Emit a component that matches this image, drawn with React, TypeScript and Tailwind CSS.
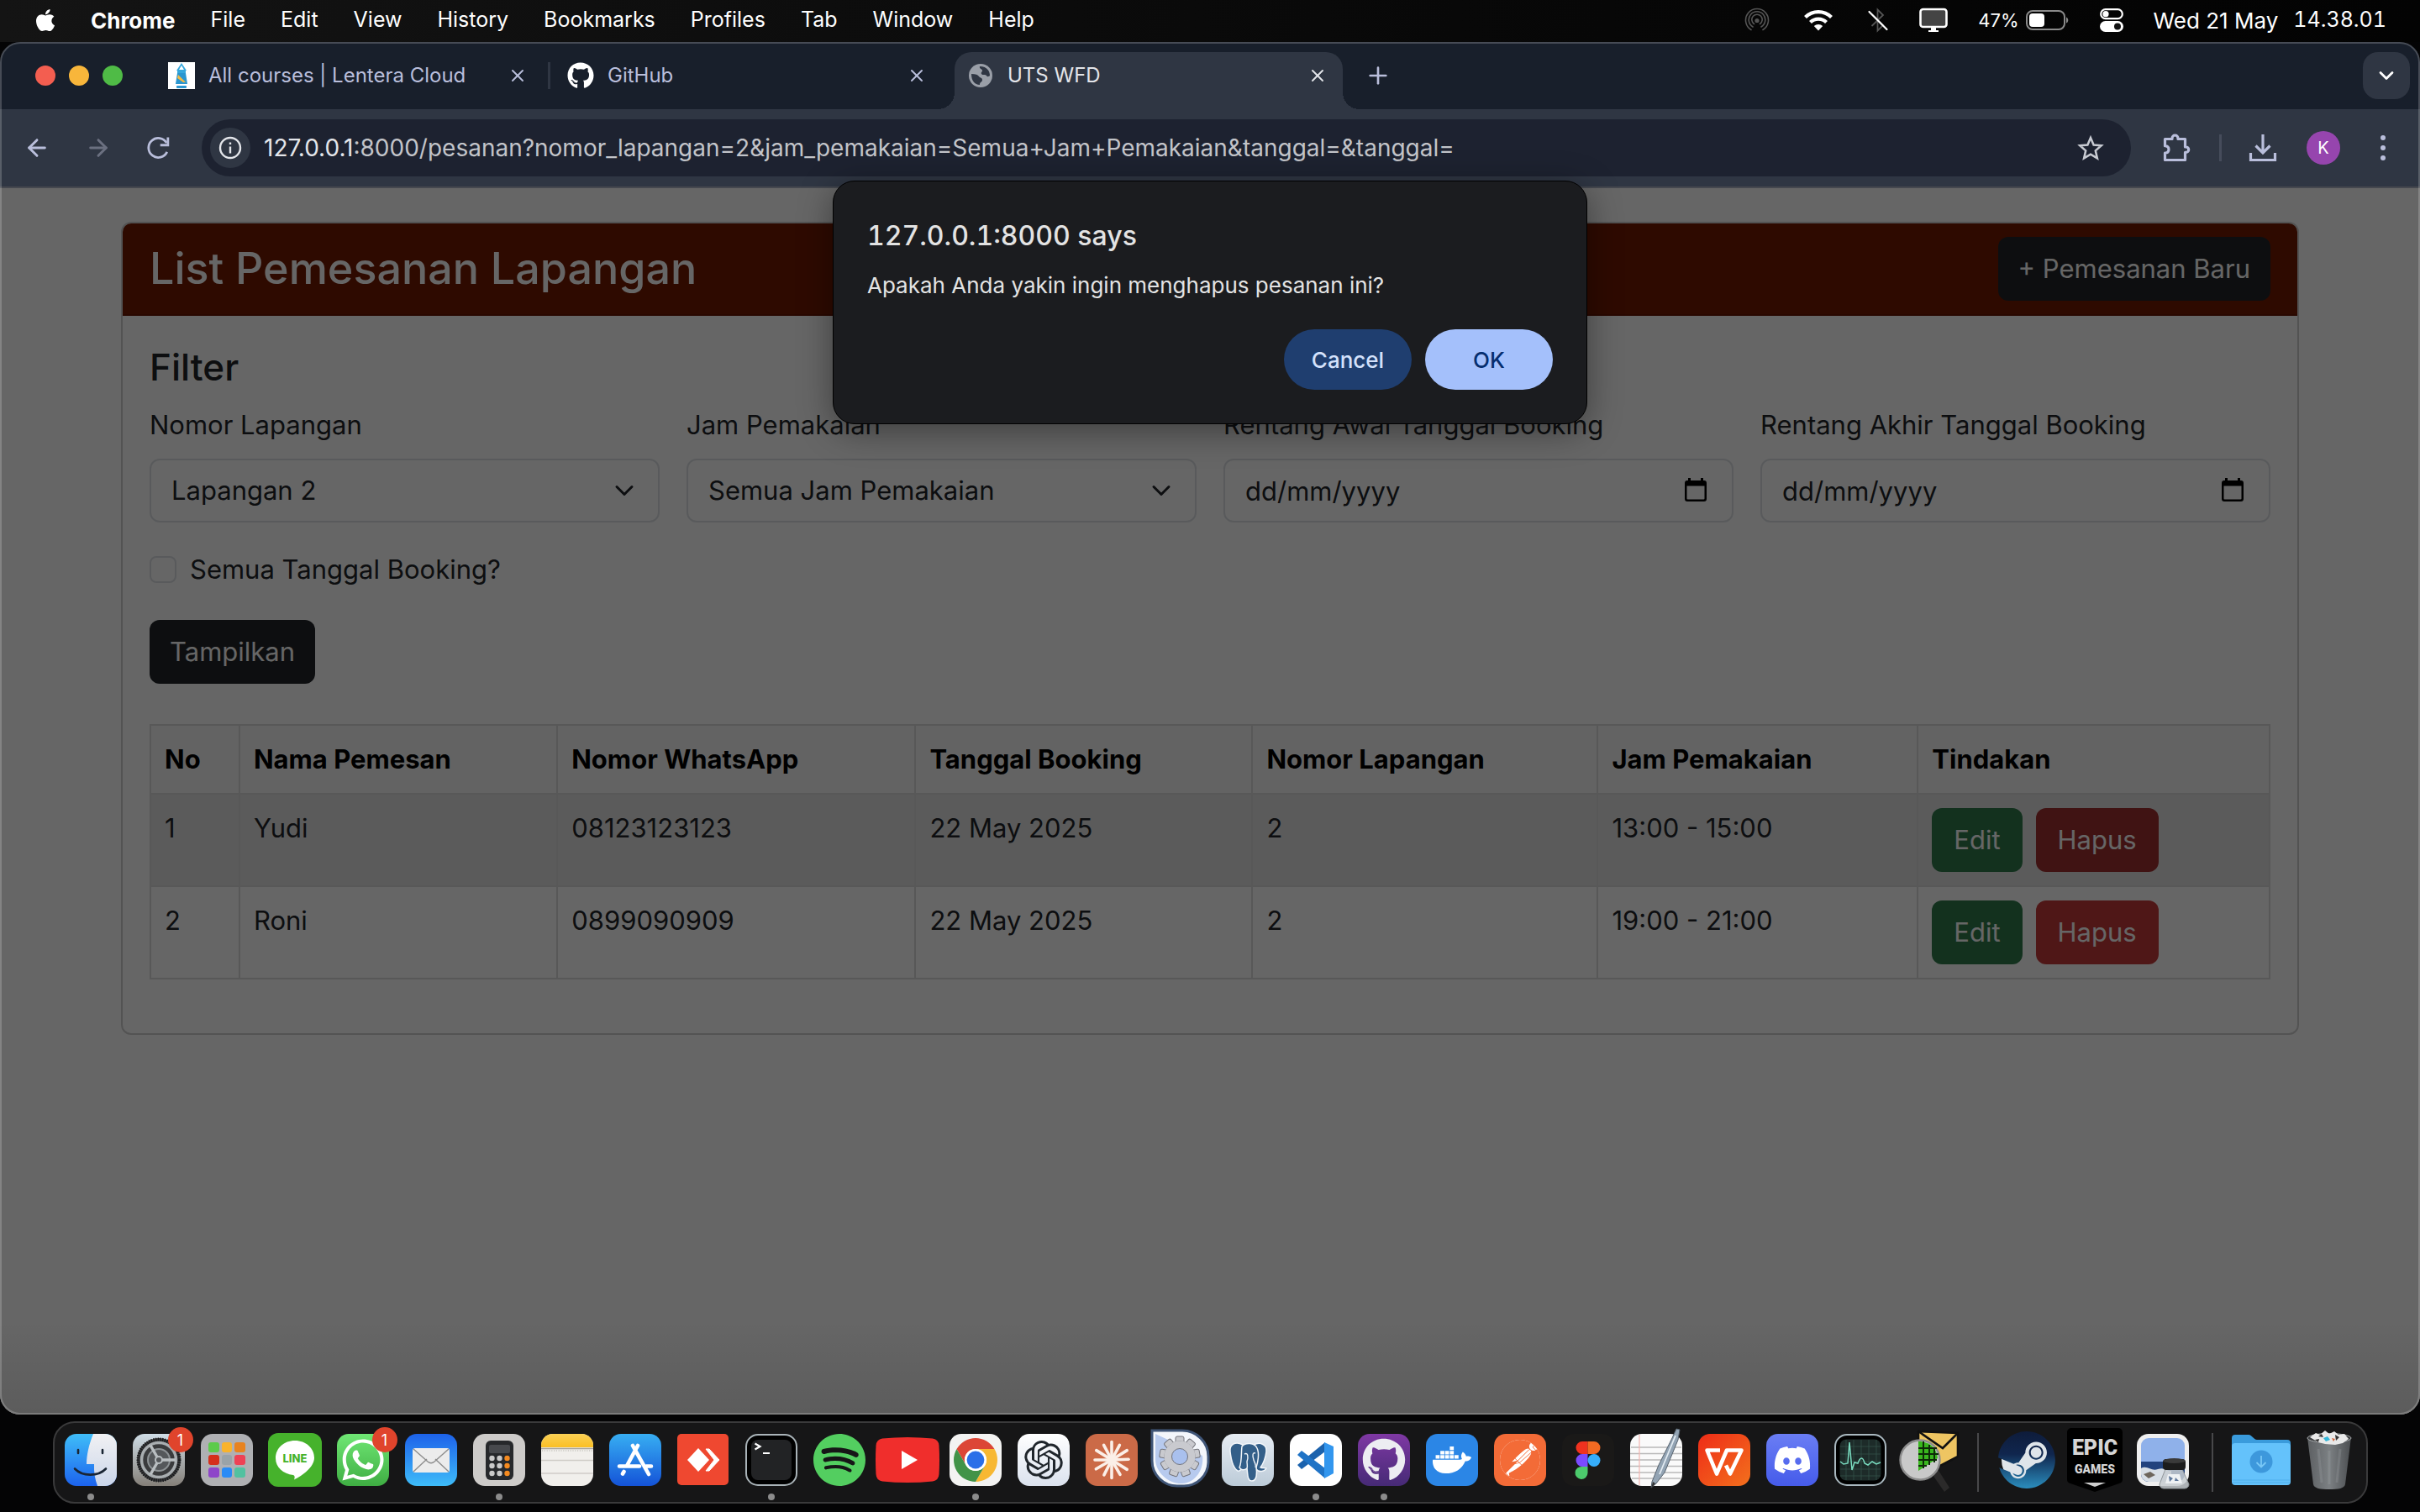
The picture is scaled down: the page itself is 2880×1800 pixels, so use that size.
import { useId } from "react";
import type { ReactNode } from "react";
import { FaApple, FaGithub, FaSteam, FaWhatsapp, FaSpotify, FaDiscord, FaDocker } from "react-icons/fa";
import { SiOpenai, SiPostman } from "react-icons/si";
import { ArrowLeft, ArrowRight, ChevronDown, Plus, X } from "lucide-react";

/* ---------- macOS menu bar ---------- */

const menus = ["File", "Edit", "View", "History", "Bookmarks", "Profiles", "Tab", "Window", "Help"];

function AirdropIcon() {
  return (
    <svg viewBox="0 0 30 30" className="size-[30px]" fill="none" stroke="#555" strokeWidth="1.6" strokeLinecap="round">
      <path d="M8 26.5a13.5 13.5 0 1 1 14 0M10 23a9.8 9.8 0 1 1 10 0M11.5 19.500a6.200 6.200 0 1 1 7 0" />
      <circle cx="15" cy="15.500" r="1.800" fill="#555" />
    </svg>
  );
}

function WifiIcon() {
  return (
    <svg viewBox="0 0 36 26" className="h-[26px] w-9" fill="none" stroke="#fff" strokeWidth="4.200">
      <path d="M2.500 9.500a22 22 0 0 1 31 0M8.500 15.500a13.500 13.500 0 0 1 19 0" />
      <path d="M18 25.500l-5.200-5.400a7.600 7.600 0 0 1 10.400 0z" fill="#fff" stroke="none" />
    </svg>
  );
}

function BluetoothOffIcon() {
  return (
    <svg viewBox="0 0 26 30" className="h-[30px] w-[26px]" fill="none" strokeWidth="1.800" strokeLinecap="round">
      <path d="M6 21.500L19 9l-6.500-6.500v25L19 21 6 8.500" stroke="#555" />
      <path d="M2.500 5l21 21" stroke="#fff" strokeWidth="2.200" />
    </svg>
  );
}

function DisplayIcon() {
  return (
    <svg viewBox="0 0 34 30" className="h-[30px] w-[34px]">
      <rect x="1.500" y="2" width="31" height="21" rx="3" fill="#444" stroke="#fff" strokeWidth="2.600" />
      <path d="M14 23h6v4h3v2H11v-2h3z" fill="#fff" />
    </svg>
  );
}

function BatteryIcon() {
  return (
    <svg viewBox="0 0 52 24" className="h-6 w-[52px]">
      <rect x="1" y="1" width="45" height="22" rx="7" fill="none" stroke="#8a8a8a" strokeWidth="2" />
      <rect x="4" y="4" width="18" height="16" rx="4" fill="#fff" />
      <path d="M48 8.500c3 1 3 6 0 7z" fill="#8a8a8a" />
    </svg>
  );
}

function ControlCenterIcon() {
  return (
    <svg viewBox="0 0 28 28" className="size-7">
      <rect x="1.200" y="1.200" width="25.600" height="11" rx="5.500" fill="none" stroke="#fff" strokeWidth="2.200" />
      <circle cx="7" cy="6.700" r="3.600" fill="#fff" />
      <rect x="0" y="15" width="28" height="13" rx="6.500" fill="#fff" />
      <circle cx="21" cy="21.500" r="4" fill="#111" />
    </svg>
  );
}

function MenuBar() {
  return (
    <header className="flex h-[50px] shrink-0 items-center bg-linear-to-r from-[#141414] to-[#030303] pr-10 pb-[2px] pl-[39px] text-[25px] text-white">
      <FaApple className="mr-[39px] size-[30px]" aria-hidden />
      <nav className="flex items-center gap-[42px]">
        <span className="text-[26px] font-bold">Chrome</span>
        {menus.map((m) => (
          <span key={m}>{m}</span>
        ))}
      </nav>
      <div className="ml-auto flex items-center">
        <AirdropIcon />
        <span className="ml-10"><WifiIcon /></span>
        <span className="ml-10"><BluetoothOffIcon /></span>
        <span className="ml-9"><DisplayIcon /></span>
        <span className="mr-2 ml-9 text-[22px]">47%</span>
        <BatteryIcon />
        <span className="mr-9 ml-9"><ControlCenterIcon /></span>
        <span className="mr-[18px] text-[26px]">Wed 21 May</span>
        <span className="tabular-nums">14.38.01</span>
      </div>
    </header>
  );
}

/* ---------- Chrome tab strip and toolbar ---------- */

function LenteraFavicon() {
  return (
    <svg viewBox="0 0 32 32" className="size-8 shrink-0">
      <rect width="32" height="32" fill="#fff" />
      <path d="M16 1l6 9H10zM11 10h10v3H11z" fill="#35a7dc" />
      <path d="M16 4l3 5h-6z" fill="#fff" />
      <path d="M11 13h10l2 13H9z" fill="#2a96d0" />
      <path d="M12 15l9 9h-3l-7-5z" fill="#f5b942" />
      <rect x="10" y="28" width="12" height="3" rx="1" fill="#2a96d0" />
    </svg>
  );
}

function GlobeIcon() {
  return (
    <svg viewBox="0 0 28 28" className="size-7 shrink-0">
      <circle cx="14" cy="14" r="14" fill="#9a9fa8" />
      <path d="M3 12c5 0 8 1 9 3s4 1 4 4-3 2-3 6c-6 0-10-5-10-13zM13 3c-1 3 3 3 3 5s-2 2-1 4 5 0 6 2 3 1 4 0c0-5-3-11-12-11z" fill="#2f3643" />
    </svg>
  );
}

function Tab({ icon, title }: { icon: ReactNode; title: string }) {
  return (
    <div className="flex w-[428px] items-center gap-4">
      {icon}
      <span className="text-[24px] text-[#b9bedb]">{title}</span>
      <button type="button" aria-label="Close tab" className="ml-auto text-[#b9bedb]">
        <X className="size-6" strokeWidth={2} />
      </button>
    </div>
  );
}

function TabStrip() {
  return (
    <div className="flex h-20 items-center bg-[#181f2b] pr-3 pl-[42px]">
      <div className="flex gap-4">
        <span className="size-6 rounded-full bg-[#f35e50]" />
        <span className="size-6 rounded-full bg-[#f8b63b]" />
        <span className="size-6 rounded-full bg-[#4fbb46]" />
      </div>
      <div className="ml-[54px]"><Tab icon={<LenteraFavicon />} title="All courses | Lentera Cloud" /></div>
      <span className="mr-5 ml-6 h-8 w-[3px] bg-[#2f3643]" />
      <Tab icon={<FaGithub className="size-8 text-white" />} title="GitHub" />
      <div className="relative ml-[33px] flex h-[68px] w-[462px] items-center gap-[18px] self-end rounded-t-[20px] bg-[#2f3643] pb-3 pl-[17px] text-[#e3e5ea]">
        <span className="absolute bottom-0 -left-5 size-5 bg-[radial-gradient(circle_at_0_0,transparent_20px,#2f3643_20px)]" />
        <span className="absolute -right-5 bottom-0 size-5 bg-[radial-gradient(circle_at_100%_0,transparent_20px,#2f3643_20px)]" />
        <GlobeIcon />
        <span className="text-[24px]">UTS WFD</span>
        <button type="button" aria-label="Close tab" className="mr-[18px] ml-auto">
          <X className="size-6" strokeWidth={2} />
        </button>
      </div>
      <button type="button" aria-label="New tab" className="ml-[26px] text-[#b9bedb]">
        <Plus className="size-8" strokeWidth={2} />
      </button>
      <button type="button" aria-label="Search tabs" className="ml-auto flex size-14 items-center justify-center rounded-[18px] bg-[#2f3643] text-white">
        <ChevronDown className="size-7" strokeWidth={2.4} />
      </button>
    </div>
  );
}

function ReloadIcon() {
  return (
    <svg viewBox="0 0 26 26" className="size-7" fill="none" stroke="#b9bedb" strokeWidth="2.600">
      <path d="M23 17.500A10.700 10.700 0 1 1 22.500 7.500" />
      <path d="M24 1.500v8.500h-8.500" />
    </svg>
  );
}

function InfoIcon() {
  return (
    <svg viewBox="0 0 28 28" className="size-7" fill="none" stroke="#e3e5ea" strokeWidth="2.400">
      <circle cx="14" cy="14" r="12" />
      <path d="M14 12.500v8M14 7.500v2.600" />
    </svg>
  );
}

function StarIcon() {
  return (
    <svg viewBox="0 0 32 32" className="size-8" fill="none" stroke="#c8cbd2" strokeWidth="2.500">
      <path d="M16 4l3.600 8.500 9.200.800-7 6.100 2.100 9L16 23.600l-7.900 4.800 2.100-9-7-6.100 9.200-.800z" />
    </svg>
  );
}

function PuzzleIcon() {
  return (
    <svg viewBox="0 0 36 36" className="size-9" fill="none" stroke="#b9bedb" strokeWidth="3.200" strokeLinejoin="round">
      <path d="M4.500 7.500H13v-1a3.500 3.500 0 0 1 7 0v1h8.500V17h1a3.200 3.200 0 0 1 0 6.400h-1v9.100h-24v-8.300c6-.500 6-8 0-8.500z" />
    </svg>
  );
}

function DownloadIcon() {
  return (
    <svg viewBox="0 0 34 34" className="size-[34px]" fill="none" stroke="#b9bedb" strokeWidth="3.200">
      <path d="M17 1v21M8.500 14.500l8.500 8.500 8.500-8.500M2.500 23v8.500h29V23" />
    </svg>
  );
}

function Toolbar() {
  return (
    <div className="flex h-[94px] items-center border-b-2 border-[#45484f] bg-[#2f3643] pr-[41px] pl-7">
      <div className="flex items-center gap-[41px]">
        <button type="button" aria-label="Back" className="text-[#b9bedb]"><ArrowLeft className="size-8" strokeWidth={2.200} /></button>
        <button type="button" aria-label="Forward" className="text-[#6b7080]"><ArrowRight className="size-8" strokeWidth={2.200} /></button>
        <button type="button" aria-label="Reload"><ReloadIcon /></button>
      </div>
      <div className="ml-[38px] flex h-[68px] flex-1 items-center rounded-full bg-[#1d2230] pr-8 pl-[10px]">
        <span className="mr-4 flex size-12 items-center justify-center rounded-full bg-[#2f3643]"><InfoIcon /></span>
        <span className="text-[28px] text-[#c2c4c9]">
          <span className="text-[#e3e5ea]">127.0.0.1</span>:8000/pesanan?nomor_lapangan=2&amp;jam_pemakaian=Semua+Jam+Pemakaian&amp;tanggal=&amp;tanggal=
        </span>
        <button type="button" aria-label="Bookmark this tab" className="ml-auto"><StarIcon /></button>
      </div>
      <button type="button" aria-label="Extensions" className="ml-9"><PuzzleIcon /></button>
      <span className="ml-[33px] h-8 w-[3px] bg-[#464c5b]" />
      <button type="button" aria-label="Downloads" className="ml-8"><DownloadIcon /></button>
      <button type="button" aria-label="Profile" className="ml-[35px] flex size-10 items-center justify-center rounded-full bg-[#9645ae] text-[20px] text-white">K</button>
      <button type="button" aria-label="More" className="ml-[48px] flex flex-col gap-[6px]">
        <span className="size-[6px] rounded-full bg-[#b9bedb]" />
        <span className="size-[6px] rounded-full bg-[#b9bedb]" />
        <span className="size-[6px] rounded-full bg-[#b9bedb]" />
      </button>
    </div>
  );
}

/* ---------- Booking page ---------- */

const fieldClass =
  "h-[76px] w-full appearance-none rounded-xl border-2 border-[#dee2e6] bg-white px-6 text-[31px] text-[#212529] outline-none placeholder:text-[#212529] placeholder:opacity-100";

function Field({ label, children }: { label: string; children: (id: string) => ReactNode }) {
  const id = useId();
  return (
    <div className="flex flex-col gap-4">
      <label htmlFor={id} className="leading-[48px]">{label}</label>
      {children(id)}
    </div>
  );
}

function SelectField({ label, value }: { label: string; value: string }) {
  return (
    <Field label={label}>
      {(id) => (
        <div className="relative">
          <select id={id} className={fieldClass} defaultValue={value}>
            <option>{value}</option>
          </select>
          <svg viewBox="0 0 24 16" className="pointer-events-none absolute top-[30px] right-[30px] h-4 w-6" fill="none" stroke="#212529" strokeWidth="3" strokeLinecap="round" strokeLinejoin="round">
            <path d="M3 3.500L12 12.500 21 3.500" />
          </svg>
        </div>
      )}
    </Field>
  );
}

function DateField({ label }: { label: string }) {
  return (
    <Field label={label}>
      {(id) => (
        <div className="relative">
          <input id={id} type="text" placeholder="dd/mm/yyyy" className={fieldClass} />
          <button type="button" aria-label="Open calendar" className="absolute top-[23px] right-8">
            <svg viewBox="0 0 26 28" className="h-7 w-[26px]">
              <path d="M4 0h3v3h12V0h3v3h1a3 3 0 0 1 3 3v19a3 3 0 0 1-3 3H3a3 3 0 0 1-3-3V6a3 3 0 0 1 3-3h1zM2.500 9.500V24.500a1 1 0 0 0 1 1h19a1 1 0 0 0 1-1V9.500z" fill="#000" fillRule="evenodd" />
            </svg>
          </button>
        </div>
      )}
    </Field>
  );
}

const bookings = [
  { no: 1, name: "Yudi", phone: "08123123123", date: "22 May 2025", court: 2, time: "13:00 - 15:00", active: true },
  { no: 2, name: "Roni", phone: "0899090909", date: "22 May 2025", court: 2, time: "19:00 - 21:00", active: false },
];

const columns = ["No", "Nama Pemesan", "Nomor WhatsApp", "Tanggal Booking", "Nomor Lapangan", "Jam Pemakaian", "Tindakan"];

function BookingTable() {
  return (
    <table className="mt-12 mb-8 w-full table-fixed border-collapse leading-[48px]">
      <colgroup>
        <col className="w-[4.2%]" />
        <col className="w-[15%]" />
        <col className="w-[16.9%]" />
        <col className="w-[15.9%]" />
        <col className="w-[16.3%]" />
        <col className="w-[15.1%]" />
        <col />
      </colgroup>
      <thead>
        <tr className="bg-[#f8f8f8] text-black">
          {columns.map((c) => (
            <th key={c} className="border-2 border-[#dcdcdc] p-4 text-left font-bold">{c}</th>
          ))}
        </tr>
      </thead>
      <tbody className="[&>tr:nth-child(odd)]:bg-[#e4e4e4]">
        {bookings.map((b) => (
          <tr key={b.no} className="align-top">
            {[b.no, b.name, b.phone, b.date, b.court, b.time].map((v, i) => (
              <td key={i} className="border-2 border-[#dcdcdc] p-4">{v}</td>
            ))}
            <td className="border-2 border-[#dcdcdc] p-4">
              <div className="flex gap-4">
                <button type="button" className="h-[76px] rounded-xl bg-[#317c4d] px-[26px] text-white">Edit</button>
                <button type="button" className={b.active ? "h-[76px] rounded-xl bg-[#a03030] px-[26px] text-white" : "h-[76px] rounded-xl bg-[#c63a3a] px-[26px] text-white"}>Hapus</button>
              </div>
            </td>
          </tr>
        ))}
      </tbody>
    </table>
  );
}

function BookingPage() {
  return (
    <main className="relative flex-1 bg-white px-[5%] pt-10 text-[31px] text-[#212529]">
      <section className="overflow-hidden rounded-xl border-2 border-[#d0d0d0]">
        <div className="flex items-center justify-between border-b-2 border-[#661500] bg-[#741a00] px-8 py-4">
          <h1 className="text-[52px] leading-[60px] font-medium text-white">List Pemesanan Lapangan</h1>
          <a href="#baru" className="flex h-[76px] items-center rounded-xl bg-[#212529] px-6 text-white">+ Pemesanan Baru</a>
        </div>
        <div className="p-8">
          <h2 className="mb-4 text-[44px] leading-[58px] font-medium">Filter</h2>
          <form>
            <div className="grid grid-cols-4 gap-8">
              <SelectField label="Nomor Lapangan" value="Lapangan 2" />
              <SelectField label="Jam Pemakaian" value="Semua Jam Pemakaian" />
              <DateField label="Rentang Awal Tanggal Booking" />
              <DateField label="Rentang Akhir Tanggal Booking" />
            </div>
            <label className="mt-8 flex h-12 items-center gap-4">
              <input type="checkbox" className="size-8 appearance-none rounded-lg border-2 border-[#dee2e6]" />
              Semua Tanggal Booking?
            </label>
            <button type="button" className="mt-9 h-[76px] rounded-xl bg-[#212529] px-6 text-white">Tampilkan</button>
          </form>
          <BookingTable />
        </div>
      </section>
      <div className="pointer-events-none absolute inset-0 bg-black/60" />
      <div className="pointer-events-none absolute inset-x-0 bottom-0 h-28 bg-linear-to-b from-transparent to-black/10" />
    </main>
  );
}

function ConfirmDialog() {
  return (
    <div role="alertdialog" aria-labelledby="dlg-title" aria-describedby="dlg-text" className="absolute top-[165px] left-1/2 w-[898px] -translate-x-1/2 rounded-[26px] border border-black bg-[#1b1c1f] px-10 pt-[46px] pb-10 text-[#e3e3e3] shadow-[0_8px_40px_rgba(0,0,0,0.4)]">
      <h2 id="dlg-title" className="text-[32px] leading-[38px] font-medium tabular-nums">127.0.0.1:8000 says</h2>
      <p id="dlg-text" className="mt-6 text-[26px] leading-8">Apakah Anda yakin ingin menghapus pesanan ini?</p>
      <div className="mt-9 flex justify-end gap-4 text-[26px] font-medium">
        <button type="button" className="h-[72px] w-[152px] rounded-full bg-[#1f3e6f] text-[#d3e1fb]">Cancel</button>
        <button type="button" className="h-[72px] w-[152px] rounded-full bg-[#a4c0fb] text-[#062e6f]">OK</button>
      </div>
    </div>
  );
}

/* ---------- Dock ---------- */

function Art({ children }: { children: ReactNode }) {
  return (
    <svg viewBox="0 0 62 62" className="size-[62px] overflow-visible" aria-hidden>
      {children}
    </svg>
  );
}

function Finder() {
  return (
    <Art>
      <defs>
        <linearGradient id="fnd" x2="0" y2="1"><stop stopColor="#3fbdf8" /><stop offset="1" stopColor="#1c63ee" /></linearGradient>
        <linearGradient id="fnd2" x2="0" y2="1"><stop stopColor="#f1f1f3" /><stop offset="1" stopColor="#cbd6ea" /></linearGradient>
        <clipPath id="fndc"><rect width="62" height="62" rx="14" /></clipPath>
      </defs>
      <g clipPath="url(#fndc)">
        <rect width="62" height="62" fill="url(#fnd)" />
        <path d="M34 0C29 12 26 25 26 36h9c-.500 9 1 18 4 26h23V0z" fill="url(#fnd2)" />
      </g>
      <g fill="none" stroke="#1a2533" strokeWidth="2.600" strokeLinecap="round">
        <path d="M16 19v4M45 19v4M12 41.500c9 9.500 28 9.500 37 0" />
      </g>
    </Art>
  );
}

function Settings() {
  return (
    <Art>
      <defs><linearGradient id="stg" x2="0" y2="1"><stop stopColor="#cfdde6" /><stop offset="1" stopColor="#858079" /></linearGradient></defs>
      <rect width="62" height="62" rx="14" fill="url(#stg)" />
      <circle cx="31" cy="31" r="26" fill="#3a3b3d" />
      <circle cx="31" cy="31" r="24.500" fill="none" stroke="#1a1b1d" strokeWidth="4" strokeDasharray="1.400 1.300" />
      <circle cx="31" cy="31" r="20.500" fill="none" stroke="#a8adb0" strokeWidth="3.500" />
      <circle cx="31" cy="31" r="13" fill="#55585b" stroke="#8d9295" strokeWidth="2" />
      <path d="M31 31h20M31 31L21 13.700M31 31L21 48.300" stroke="#b9bec1" strokeWidth="3.400" />
      <circle cx="31" cy="31" r="4" fill="#55585b" stroke="#b9bec1" strokeWidth="2" />
    </Art>
  );
}

const pads = ["#5ccb4b", "#f9b32c", "#e8831f", "#d5301c", "#9aa3a8", "#ee4155", "#8e46c9", "#2a8bf5", "#52c1a0"];

function Launchpad() {
  return (
    <div className="grid size-[62px] grid-cols-3 content-center justify-center gap-[3px] rounded-[14px] bg-[#afb0b3] p-[9px]">
      {pads.map((c) => (
        <span key={c} className="h-3 rounded-[3px]" style={{ backgroundColor: c }} />
      ))}
    </div>
  );
}

function Line() {
  return (
    <Art>
      <rect x="-1" y="-1" width="64" height="64" rx="12" fill="#46b22c" />
      <path d="M31 8C18 8 8 17 8 29c0 11 9 18.500 21 20 2 .500 2 3 1 5.500 10-5 24-15 24-26C54 17 44 8 31 8z" fill="#fff" />
      <text x="31" y="34" textAnchor="middle" fontSize="13" fontWeight="800" fill="#46b22c" fontFamily="Inter, sans-serif">LINE</text>
    </Art>
  );
}

function Mail() {
  return (
    <Art>
      <defs>
        <linearGradient id="mal" x2="0" y2="1"><stop stopColor="#1d62ea" /><stop offset="1" stopColor="#3ebcf9" /></linearGradient>
      </defs>
      <rect width="62" height="62" rx="14" fill="url(#mal)" />
      <rect x="9" y="17" width="44" height="29" rx="3" fill="#ececec" />
      <path d="M10 45l16-15M52 45L36 30M10 18l17 15c3 2.500 5 2.500 8 0l17-15" fill="none" stroke="#8d8d8d" strokeWidth="1.400" />
    </Art>
  );
}

function Calculator() {
  return (
    <Art>
      <rect width="62" height="62" rx="14" fill="#cdcbc9" />
      <rect x="15" y="8" width="33" height="47" rx="6" fill="#26282b" />
      <rect x="19" y="13" width="25" height="10" rx="2" fill="#47494d" />
      {[29, 38, 47].map((y) => (
        <g key={y}>
          <circle cx="22.500" cy={y} r="3.200" fill="#c9c9c9" />
          <circle cx="31.500" cy={y} r="3.200" fill="#c9c9c9" />
          <circle cx="40.500" cy={y} r="3.200" fill="#f58a1f" />
        </g>
      ))}
    </Art>
  );
}

function Notes() {
  return (
    <Art>
      <defs>
        <clipPath id="ntc"><rect width="62" height="62" rx="14" /></clipPath>
        <linearGradient id="nty" x2="0" y2="1"><stop stopColor="#fbd155" /><stop offset="1" stopColor="#fabf25" /></linearGradient>
      </defs>
      <g clipPath="url(#ntc)">
        <rect width="62" height="62" fill="#f1efec" />
        <rect width="62" height="16" fill="url(#nty)" />
        <path d="M0 17.500h62" stroke="#a8a49a" strokeWidth="1.400" />
        <path d="M1 20h60" stroke="#b5b2aa" strokeWidth="1.200" strokeDasharray="1.200 1.600" />
        <path d="M0 31.500h62M0 47h62" stroke="#cfccc7" strokeWidth="1.600" />
      </g>
    </Art>
  );
}

function AppStore() {
  return (
    <Art>
      <defs><linearGradient id="aps" x2="0" y2="1"><stop stopColor="#37aef2" /><stop offset="1" stopColor="#1453d8" /></linearGradient></defs>
      <rect width="62" height="62" rx="14" fill="url(#aps)" />
      <g stroke="#fff" strokeWidth="4.600" strokeLinecap="round">
        <path d="M34 14L21 38M28 14l19 34M12 38.500h24M44 38.500h6M17.500 45l-1.500 2.500" />
      </g>
    </Art>
  );
}

function AnyDesk() {
  return (
    <Art>
      <rect width="61" height="61" rx="5" fill="#ef4830" />
      <path d="M25 17l13 14-13 14-13-14z" fill="#fff" />
      <path d="M34 18h4l12 13-12 13h-4l10-13z" fill="#fff" stroke="#fff" />
    </Art>
  );
}

function Terminal() {
  return (
    <Art>
      <rect x="1" y="1" width="60" height="60" rx="14" fill="#000" stroke="#a9b3b8" strokeWidth="2" />
      <rect x="7" y="7" width="48" height="48" rx="8" fill="#222325" />
      <path d="M11.500 11.500l6 3.500-6 3.500M21 23h8" fill="none" stroke="#fff" strokeWidth="2.200" />
    </Art>
  );
}

function YouTube() {
  return (
    <svg viewBox="0 0 76 54" className="h-[54px] w-[76px] shrink-0" aria-hidden>
      <path d="M8 1.500Q38-1.500 68 1.500 75 2.500 75.500 10 76.500 27 75.500 44 75 51.500 68 52.500 38 55.500 8 52.500 1 51.500.500 44-.500 27 .500 10 1 2.500 8 1.500z" fill="#f02e2c" />
      <path d="M31 16l19 11-19 11z" fill="#fff" />
    </svg>
  );
}

function Chrome() {
  return (
    <Art>
      <rect width="62" height="62" rx="14" fill="#f3f3f2" />
      <path d="M31 18H53.500A26 26 0 0 0 8.500 18L19.740 37.500A13 13 0 0 1 31 18z" fill="#dc4636" />
      <path d="M42.260 37.500L31 57A26 26 0 0 0 53.500 18H31A13 13 0 0 1 42.260 37.500z" fill="#f7b832" />
      <path d="M19.740 37.500L8.500 18A26 26 0 0 0 31 57L42.260 37.500A13 13 0 0 1 19.740 37.500z" fill="#419348" />
      <circle cx="31" cy="31" r="13" fill="#fff" />
      <circle cx="31" cy="31" r="10.400" fill="#2a6fe8" />
    </Art>
  );
}

const rays = [0, 28, 58, 88, 122, 150, 180, 207, 240, 270, 302, 332];

function Claude() {
  return (
    <Art>
      <rect width="62" height="62" rx="14" fill="#cb6a47" />
      <g stroke="#fbefe8" strokeWidth="3.600" strokeLinecap="round">
        {rays.map((r, i) => (
          <path key={r} d={i % 2 ? "M31 31V11" : "M31 31V9.500"} transform={`rotate(${r} 31 31)`} />
        ))}
      </g>
    </Art>
  );
}

const teeth = [0, 40, 80, 120, 160, 200, 240, 280, 320];

function GearApp() {
  return (
    <Art>
      <path d="M-2-4H34A31 31 0 0 1 65 27V34A29 29 0 0 1 36 62H28A30 30 0 0 1-2 32z" fill="#f3f6fb" stroke="#3f5577" strokeWidth="3" />
      <path d="M2 0l56 26c2 16-8 32-24 33C18 60 2 46 2 30z" fill="#b7caee" />
      <g fill="#c9cacf" stroke="#74757c" strokeWidth="1">
        {teeth.map((t) => (
          <rect key={t} x="26" y="3" width="10" height="14" rx="2" transform={`rotate(${t} 31 27)`} />
        ))}
        <circle cx="31" cy="27" r="18" />
        <circle cx="31" cy="27" r="9.500" fill="#a9c0ee" />
      </g>
      <circle cx="31" cy="27" r="16" fill="none" stroke="#c9cacf" strokeWidth="5" />
    </Art>
  );
}

function Postgres() {
  return (
    <Art>
      <defs><linearGradient id="pgs" x2="0" y2="1"><stop stopColor="#e6ecf3" /><stop offset="1" stopColor="#bccbd8" /></linearGradient></defs>
      <rect width="62" height="62" rx="14" fill="url(#pgs)" />
      <g fill="#335f89" stroke="#f2f6fa" strokeWidth="1.500" strokeLinejoin="round">
        <path d="M38 13c8-4 16 0 15 8-1 8-4 15-7 19 3 1 5 0 7 1-2 4-9 5-12 1z" />
        <path d="M25 13C16 8 9 13 10 21c1 9 4 20 9 23 3 1 5-3 6-6z" />
        <path d="M24 15c4-5 15-5 18 2 3 6 1 17-1 23 1 6 1 16-5 16s-5-9-6-15c-4 3-7 2-9-1 3-6 2-18 3-25z" />
      </g>
      <path d="M27 24c4-2 5 3 3 9 0 3 1 5 0 8M40 23c-3-1-4 2-2 8s3 5 2 9" fill="none" stroke="#f2f6fa" strokeWidth="1.400" />
    </Art>
  );
}

function VsCode() {
  return (
    <Art>
      <rect width="62" height="62" rx="14" fill="#fff" />
      <path d="M9 37l5 5 28-21V10z" fill="#1b62ad" />
      <path d="M9 25l5-5 28 21v12z" fill="#1f73c6" />
      <path d="M41 10l11 5v32l-11 6z" fill="#3296ee" />
    </Art>
  );
}

function Figma() {
  return (
    <Art>
      <rect width="62" height="62" rx="14" fill="#1a1918" />
      <path d="M30.500 9H24a7.500 7.500 0 0 0 0 15h6.500z" fill="#f0321f" />
      <path d="M30.500 9H38a7.500 7.500 0 0 1 0 15h-7.500z" fill="#f36a22" />
      <path d="M30.500 24H24a7.500 7.500 0 0 0 0 15h6.500z" fill="#7a4bff" />
      <circle cx="38" cy="31.500" r="7.500" fill="#36aefb" />
      <path d="M30.500 39H24a7.500 7.500 0 1 0 6.500 7.500z" fill="#4cca6c" />
    </Art>
  );
}

function TextEdit() {
  return (
    <Art>
      <rect width="62" height="62" rx="14" fill="#fafafa" />
      <path d="M1 16h60M0 23.500h62M0 31h62M0 38.500h62M0 46h62M2 53h58" stroke="#b9b9b9" strokeWidth="1.300" />
      <path d="M11 1v60" stroke="#f3b5b0" strokeWidth="1.200" />
      <path d="M55-6l4 1-2 12-16 39-10 13-6 5 1-7 8-20L50 5z" fill="#93a4b4" stroke="#56626e" strokeWidth="1" />
      <path d="M54 2L35 48" stroke="#e3ecf3" strokeWidth="1.800" />
      <path d="M27 57l-2 8 5-6z" fill="#333" />
    </Art>
  );
}

function Wps() {
  return (
    <Art>
      <defs><linearGradient id="wps" x2="1" y2="1"><stop stopColor="#ee2c17" /><stop offset="1" stopColor="#f3701d" /></linearGradient></defs>
      <rect width="62" height="62" rx="14" fill="url(#wps)" />
      <path d="M26 19.500H10.500L22 47.500l12-28H51.500L38 47.500l-5-10" fill="none" stroke="#fff" strokeWidth="4.600" strokeLinejoin="round" />
    </Art>
  );
}

function ActivityMonitor() {
  return (
    <Art>
      <rect x="1" y="1" width="60" height="60" rx="14" fill="#000" stroke="#a9b8bf" strokeWidth="2" />
      <rect x="6.500" y="6.500" width="49" height="49" rx="8" fill="#1d2b29" />
      <path d="M14 7v48M23 7v48M32 7v48M41 7v48M50 7v48M7 15h48M7 24h48M7 33h48M7 42h48M7 50h48" stroke="#33504a" strokeWidth=".800" />
      <path d="M7 33l4 3 5-1 2-25 3 33 3-9 4 1c3-8 6-8 8 0l4 2 5-4 5 3 5-2" fill="none" stroke="#7adcc0" strokeWidth="1.500" />
    </Art>
  );
}

function PacketTool() {
  return (
    <Art>
      <path d="M19-3l47 2v28L45 38 19 22z" fill="#eec562" stroke="#111" strokeWidth="2.600" />
      <path d="M19-3l29 20L66-1" fill="none" stroke="#111" strokeWidth="2.600" />
      <path d="M34 46l8-4 14 22-6 5z" fill="#2b2a2a" />
      <circle cx="21" cy="31" r="23.500" fill="#c9c9c9" stroke="#8c8c8c" strokeWidth="2.400" />
      <path d="M19 9c14 0 22 8 23 20L19 44z" fill="#39b61e" />
      <path d="M25 9v32M32 13v24M38 18v16M19 17h22M19 24h24M19 31h22M19 38h10" stroke="#0d2a08" strokeWidth="2" />
    </Art>
  );
}

function Steam() {
  return (
    <span className="relative flex size-[70px] shrink-0 items-center justify-center">
      <span className="absolute size-[60px] rounded-full bg-[#dfe5ea]" />
      <svg className="absolute size-0">
        <linearGradient id="stm" x2="0" y2="1"><stop stopColor="#0e1c3b" /><stop offset=".4" stopColor="#10264e" /><stop offset="1" stopColor="#2b8dbd" /></linearGradient>
      </svg>
      <FaSteam className="relative size-[70px]" fill="url(#stm)" />
    </span>
  );
}

function Epic() {
  return (
    <div className="relative h-[76px] w-[66px] shrink-0">
      <svg viewBox="0 0 66 76" className="absolute inset-0">
        <path d="M5 0h56a5 5 0 0 1 5 5v56c0 3-1 4-4 5L33 76 4 66c-3-1-4-2-4-5V5a5 5 0 0 1 5-5z" fill="#000" />
        <path d="M20 65h26l-13 5z" fill="#cfcfcf" />
      </svg>
      <div className="relative flex flex-col items-center pt-2 font-['Roboto'] font-black text-[#d5d5d5]">
        <span className="text-[25px] leading-8">EPIC</span>
        <span className="text-[14px] leading-[18px]">GAMES</span>
      </div>
    </div>
  );
}

function Preview() {
  return (
    <Art>
      <rect width="62" height="62" rx="14" fill="#efefef" />
      <rect x="5" y="5" width="52" height="52" rx="9" fill="#8fb1ea" />
      <path d="M5 33h52v15a9 9 0 0 1-9 9H14a9 9 0 0 1-9-9z" fill="#22437e" />
      <path d="M5 41c8-4 12 4 20 1s12 3 16 2v13H14a9 9 0 0 1-9-9z" fill="#d8dfe6" />
      <path d="M8 48l8-3 6 4-8 4z" fill="#6e665c" />
      <path d="M34 42h20l8 18a5 5 0 0 1-5 5H32a5 5 0 0 1-5-5z" fill="#c7cdd1" fillOpacity=".850" stroke="#8f9599" />
      <path d="M37 48h14l3 11H34z" fill="#eef1f4" />
      <path d="M38 50l5 3-4 4zM46 52l4 4h-5z" fill="#5f789b" />
      <rect x="31" y="30" width="27" height="13" rx="4" fill="#1c1c1c" />
      <ellipse cx="44.500" cy="32" rx="13" ry="3" fill="#3a3a3a" />
    </Art>
  );
}

function DownloadsFolder() {
  return (
    <svg viewBox="0 0 70 60" className="h-[60px] w-[70px] shrink-0" aria-hidden>
      <path d="M0 4a4 4 0 0 1 4-4h16c4 0 6 6 10 6h36a4 4 0 0 1 4 4v20H0z" fill="#3a9bdc" />
      <rect y="10" width="70" height="50" rx="4" fill="#64c2fb" />
      <path d="M1 54h68M1 57h68" stroke="#4eaeea" />
      <circle cx="35" cy="32" r="13.500" fill="#3d98dc" />
      <path d="M35 25v13M29.500 33l5.500 5.500 5.500-5.500" fill="none" stroke="#79c8f6" strokeWidth="1.800" />
    </svg>
  );
}

function Trash() {
  return (
    <svg viewBox="0 0 54 70" className="h-[70px] w-[54px] shrink-0" aria-hidden>
      <defs><linearGradient id="trs" x2="1" y2="0"><stop stopColor="#5c5f62" /><stop offset=".5" stopColor="#7c8083" /><stop offset="1" stopColor="#4b4e51" /></linearGradient></defs>
      <path d="M1 8h52l-7 56c-1 5-8 6-19 6S9 69 8 64z" fill="url(#trs)" />
      <ellipse cx="27" cy="9" rx="26" ry="5.500" fill="#3c3e40" stroke="#a5a8aa" />
      <path d="M4 8l7-5 5 2 6-5 5 4 6-3 5 4 7-1 5 6-7 5-9 2-12-1-8-2z" fill="#e9e9e9" />
      <path d="M14 7l4-3 2 4zM34 5l5 3-4 4zM10 11l5-1-1 4z" fill="#333" />
      <path d="M20 9l5-2 3 4-5 2z" fill="#35b7d8" />
      <path d="M30 9l4 1-2 3z" fill="#d1643a" />
      <path d="M14 22l4 40M27 24v40M40 22l-4 40" stroke="#a3a7aa" strokeOpacity=".250" strokeWidth="3" />
    </svg>
  );
}

type App = { name: string; icon: ReactNode; running?: boolean; badge?: number };

const tile = "flex size-[62px] items-center justify-center rounded-[14px]";

const apps: App[] = [
  { name: "Finder", icon: <Finder />, running: true },
  { name: "System Settings", icon: <Settings />, badge: 1 },
  { name: "Launchpad", icon: <Launchpad /> },
  { name: "LINE", icon: <Line /> },
  { name: "WhatsApp", icon: <span className={`${tile} bg-linear-to-b from-[#6fe774] to-[#3fae43]`}><FaWhatsapp className="size-[56px] text-white" /></span>, badge: 1 },
  { name: "Mail", icon: <Mail /> },
  { name: "Calculator", icon: <Calculator />, running: true },
  { name: "Notes", icon: <Notes /> },
  { name: "App Store", icon: <AppStore /> },
  { name: "AnyDesk", icon: <AnyDesk /> },
  { name: "Terminal", icon: <Terminal />, running: true },
  { name: "Spotify", icon: <FaSpotify className="size-16 text-[#53ce60]" /> },
  { name: "YouTube", icon: <YouTube /> },
  { name: "Chrome", icon: <Chrome />, running: true },
  { name: "ChatGPT", icon: <span className={`${tile} bg-linear-to-b from-white to-[#dbe2ee]`}><SiOpenai className="size-[46px] text-[#20262c]" /></span> },
  { name: "Claude", icon: <Claude /> },
  { name: "Gear", icon: <GearApp /> },
  { name: "PostgreSQL", icon: <Postgres /> },
  { name: "Visual Studio Code", icon: <VsCode />, running: true },
  { name: "GitHub Desktop", icon: <span className={`${tile} bg-linear-to-b from-[#7f38a4] to-[#462a76]`}><FaGithub className="size-[52px] text-[#ededf2]" /></span>, running: true },
  { name: "Docker", icon: <span className={`${tile} bg-[#2b86e6]`}><FaDocker className="size-[46px] text-white" /></span> },
  { name: "Postman", icon: <span className={`${tile} bg-[#f36b37]`}><span className="flex size-12 items-center justify-center overflow-hidden rounded-full bg-white"><SiPostman className="size-[68px] shrink-0 text-[#f36b37]" /></span></span> },
  { name: "Figma", icon: <Figma /> },
  { name: "TextEdit", icon: <TextEdit /> },
  { name: "WPS Office", icon: <Wps /> },
  { name: "Discord", icon: <span className={`${tile} bg-linear-to-b from-[#6a7df4] to-[#465bea]`}><FaDiscord className="size-[46px] text-white" /></span> },
  { name: "Activity Monitor", icon: <ActivityMonitor /> },
  { name: "Packet Tool", icon: <PacketTool /> },
];

const recent: App[] = [
  { name: "Steam", icon: <Steam /> },
  { name: "Epic Games", icon: <Epic /> },
  { name: "Preview", icon: <Preview /> },
];

const places: App[] = [
  { name: "Downloads", icon: <DownloadsFolder /> },
  { name: "Trash", icon: <Trash /> },
];

function DockItem({ app }: { app: App }) {
  return (
    <button type="button" aria-label={app.name} className="relative flex h-[90px] w-[81px] shrink-0 items-center justify-center pb-[6px]">
      {app.icon}
      {app.badge && (
        <span className="absolute top-[3px] right-0 flex size-[30px] items-center justify-center rounded-full bg-[#e0442c] text-[18px] text-white">{app.badge}</span>
      )}
      {app.running && <span className="absolute bottom-0 left-1/2 size-2 -translate-x-1/2 rounded-full bg-[#8c8c8c]" />}
    </button>
  );
}

function DockDivider() {
  return <span className="mx-[17px] h-[70px] w-[2px] shrink-0 bg-[#48484a]" />;
}

function Dock() {
  return (
    <footer className="flex shrink-0 justify-center bg-[#040405] pt-2 pb-[10px]">
      <div className="flex h-[98px] items-center rounded-[26px] border-2 border-[#3a3a3b] bg-[#161617] px-[3px]">
        {apps.map((a) => <DockItem key={a.name} app={a} />)}
        <DockDivider />
        {recent.map((a) => <DockItem key={a.name} app={a} />)}
        <DockDivider />
        {places.map((a) => <DockItem key={a.name} app={a} />)}
      </div>
    </footer>
  );
}

export default function App() {
  return (
    <div className="flex min-h-screen flex-col bg-[#040405] font-['Inter','Liberation_Sans',sans-serif]">
      <MenuBar />
      <div className="relative flex flex-1 flex-col">
        <div className="flex flex-1 flex-col overflow-hidden rounded-[24px]">
          <TabStrip />
          <Toolbar />
          <BookingPage />
        </div>
        <div className="pointer-events-none absolute inset-0 rounded-[24px] border-2 border-white/20" />
        <ConfirmDialog />
      </div>
      <Dock />
    </div>
  );
}
